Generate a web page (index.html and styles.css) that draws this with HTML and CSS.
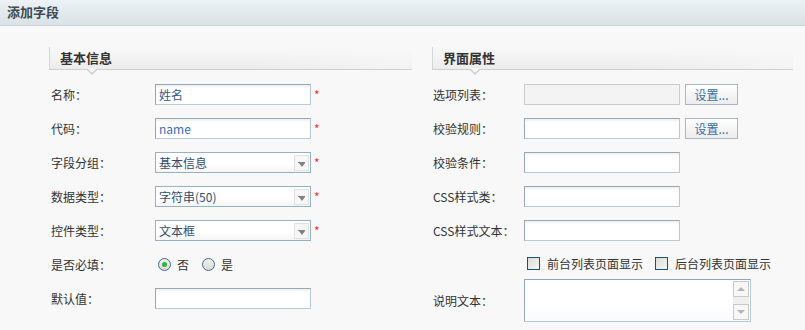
FILE: index.html
```html
<!DOCTYPE html>
<html lang="zh-CN">
<head>
    <meta charset="UTF-8">
    <title>添加字段</title>
    <link rel="stylesheet" href="styles.css">
</head>
<body>
    <div class="panel-head">添加字段</div>

    <div class="form-wrap">
        <!-- 基本信息 -->
        <div class="col col-left">
            <div class="sec-title"><span>基本信息</span><i class="sec-arrow"></i></div>

            <div class="row">
                <label>名称：</label>
                <div class="field"><input class="txt val-cn" type="text" value="姓名"></div>
                <span class="req">*</span>
            </div>
            <div class="row">
                <label>代码：</label>
                <div class="field"><input class="txt val-en" type="text" value="name"></div>
                <span class="req">*</span>
            </div>
            <div class="row">
                <label>字段分组：</label>
                <div class="field sel"><span>基本信息</span><i class="sel-btn"></i></div>
                <span class="req">*</span>
            </div>
            <div class="row">
                <label>数据类型：</label>
                <div class="field sel"><span>字符串(50)</span><i class="sel-btn"></i></div>
                <span class="req">*</span>
            </div>
            <div class="row">
                <label>控件类型：</label>
                <div class="field sel"><span>文本框</span><i class="sel-btn"></i></div>
                <span class="req">*</span>
            </div>
            <div class="row">
                <label>是否必填：</label>
                <div class="radios">
                    <span class="radio on"></span><span class="opt">否</span>
                    <span class="radio"></span><span class="opt">是</span>
                </div>
            </div>
            <div class="row">
                <label>默认值：</label>
                <div class="field"><input class="txt" type="text"></div>
            </div>
        </div>

        <!-- 界面属性 -->
        <div class="col col-right">
            <div class="sec-title"><span>界面属性</span><i class="sec-arrow"></i></div>

            <div class="row">
                <label>选项列表：</label>
                <div class="field"><input class="txt disabled" type="text" disabled></div>
                <button class="btn" type="button">设置...</button>
            </div>
            <div class="row">
                <label>校验规则：</label>
                <div class="field"><input class="txt" type="text"></div>
                <button class="btn" type="button">设置...</button>
            </div>
            <div class="row">
                <label>校验条件：</label>
                <div class="field"><input class="txt" type="text"></div>
            </div>
            <div class="row">
                <label>CSS样式类：</label>
                <div class="field"><input class="txt" type="text"></div>
            </div>
            <div class="row">
                <label>CSS样式文本：</label>
                <div class="field"><input class="txt" type="text"></div>
            </div>
            <div class="row row-check">
                <label></label>
                <div class="checks">
                    <span class="check"></span><span class="opt">前台列表页面显示</span>
                    <span class="check"></span><span class="opt">后台列表页面显示</span>
                </div>
            </div>
            <div class="row row-area">
                <label>说明文本：</label>
                <div class="area">
                    <div class="area-text"></div>
                    <div class="scroll">
                        <i class="sc-btn up"></i>
                        <i class="sc-track"></i>
                        <i class="sc-btn down"></i>
                    </div>
                </div>
            </div>
        </div>
    </div>
</body>
</html>
```

FILE: styles.css
```css
body {
    margin: 0;
    padding: 0;
    background-color: #f8f8f8;
    font-family: "Noto Sans CJK SC", "DejaVu Sans", sans-serif;
    font-size: 12px;
    color: #333;
}

.panel-head {
    height: 25px;
    line-height: 24px;
    padding-left: 7px;
    font-size: 13px;
    font-weight: bold;
    color: #3d4a52;
    background: linear-gradient(#ecf2f5, #d9e2e6);
    border-bottom: 1px solid #c9d3d8;
}

.form-wrap {
    display: flex;
    gap: 20px;
    padding: 21px 0 0 49px;
}
.col-left {
    width: 363px;
}
.col-right {
    width: 361px;
}

/* section title with the little pointer */
.sec-title {
    position: relative;
    height: 22px;
    line-height: 21px;
    padding-left: 10px;
    font-size: 13px;
    font-weight: bold;
    color: #333;
    border-left: 1px solid #d6d6d6;
    border-bottom: 1px solid #cfcfcf;
    background: linear-gradient(to right, rgba(248, 248, 248, 0) 55%, rgba(248, 248, 248, 0.6)),
                linear-gradient(#f9f9f9, #ececec);
    margin-bottom: 14px;
}
.sec-arrow {
    position: absolute;
    left: 36px;
    bottom: -6px;
    width: 0;
    height: 0;
    border-left: 6px solid transparent;
    border-right: 6px solid transparent;
    border-top: 6px solid #cfcfcf;
}
.sec-arrow::after {
    content: "";
    position: absolute;
    left: -5px;
    top: -7px;
    border-left: 5px solid transparent;
    border-right: 5px solid transparent;
    border-top: 5px solid #f6f6f6;
}

.row {
    display: flex;
    align-items: center;
    height: 21px;
    margin-bottom: 13px;
}
.row label {
    flex: none;
    padding-left: 2px;
    width: 104px;
}
.col-right .row label {
    padding-left: 1px;
    width: 91px;
}

.field {
    width: 156px;
    height: 21px;
    box-sizing: border-box;
}
.txt {
    width: 156px;
    height: 21px;
    box-sizing: border-box;
    margin: 0;
    padding: 0 3px;
    font-family: inherit;
    font-size: 12px;
    border: 1px solid;
    border-color: #97a7b6 #b7cad9 #b7cad9 #97a7b6;
    background: #fff;
    box-shadow: inset 0 2px 2px rgba(0, 0, 0, 0.06);
    outline: none;
}
.val-cn {
    color: #2d5b8c;
}
.val-en {
    color: #3a6cc0;
}
.txt.disabled {
    background: #f3f3f3;
    border-color: #c9cccf;
    box-shadow: none;
}

.req {
    color: #ff2a2a;
    font-size: 12px;
    margin: 4px 0 0 3px;
    align-self: flex-start;
    line-height: 14px;
}

/* select boxes */
.sel {
    display: flex;
    align-items: center;
    justify-content: space-between;
    border: 1px solid #95b2c2;
    background: linear-gradient(#fff 60%, #f4f4f4);
    padding: 0 1px 0 3px;
    color: #2f4e6c;
}
.sel-btn {
    position: relative;
    width: 15px;
    height: 16px;
    box-sizing: border-box;
    border: 1px solid #e2e2e2;
    background: #f7f7f7;
}
.sel-btn::before {
    content: "";
    position: absolute;
    left: 3px;
    top: 6px;
    width: 7px;
    height: 1px;
    background: #808080;
}
.sel-btn::after {
    content: "";
    position: absolute;
    left: 4px;
    top: 7px;
    border-left: 3px solid transparent;
    border-right: 3px solid transparent;
    border-top: 4px solid #808080;
}

/* radios */
.radios,
.checks {
    display: flex;
    align-items: center;
}
.radio {
    width: 11px;
    height: 11px;
    border: 1px solid #3f6a95;
    border-radius: 50%;
    background: linear-gradient(#f0f0ec, #dcdcd6);
    margin-left: 3px;
    position: relative;
}
.radio.on::after {
    content: "";
    position: absolute;
    left: 3px;
    top: 3px;
    width: 5px;
    height: 5px;
    border-radius: 50%;
    background: #2bb63a;
}
.radios .opt {
    margin: 0 10px 0 6px;
}

/* checkboxes */
.row-check {
    height: 18px;
    margin-bottom: 7px;
}
.check {
    width: 11px;
    height: 11px;
    border: 1px solid #1c4f7c;
    background: linear-gradient(135deg, #dcdcd4, #f8f8f4);
    margin-left: 3px;
}
.checks .opt {
    margin: 0 9px 0 7px;
}

/* textarea */
.row-area {
    height: 43px;
}
.area {
    display: flex;
    width: 227px;
    height: 43px;
    box-sizing: border-box;
    border: 1px solid;
    border-color: #97a7b6 #b7cad9 #b7cad9 #97a7b6;
    background: linear-gradient(#fff 50%, #fafbfd);
}
.area-text {
    flex: 1;
}
.scroll {
    width: 17px;
    display: flex;
    flex-direction: column;
    padding: 1px 1px 1px 0;
    box-sizing: border-box;
}
.sc-track {
    flex: 1;
    background: #efefef;
}
.sc-btn {
    position: relative;
    height: 16px;
    box-sizing: border-box;
    border: 1px solid #c9c9c9;
    background: #f7f7f7;
}
.sc-btn.up::after,
.sc-btn.down::after {
    content: "";
    position: absolute;
    left: 3px;
    border-left: 4px solid transparent;
    border-right: 4px solid transparent;
}
.sc-btn.up::after {
    top: 5px;
    border-bottom: 4px solid #b5b5b5;
}
.sc-btn.down::after {
    top: 5px;
    border-top: 4px solid #b5b5b5;
}

/* buttons */
.btn {
    margin-left: 5px;
    width: 53px;
    height: 21px;
    padding: 0;
    font-family: inherit;
    font-size: 12px;
    color: #3a6ea5;
    border: 1px solid #a6b8c9;
    background: linear-gradient(#ffffff, #ececec);
    cursor: pointer;
}
```
